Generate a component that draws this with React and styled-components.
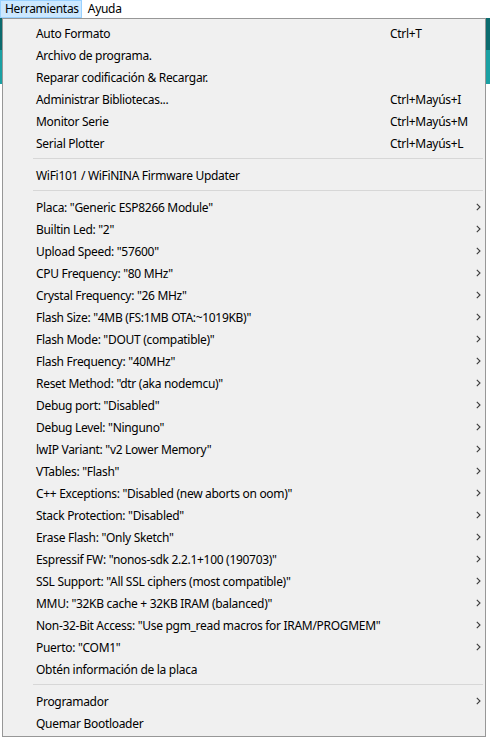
import React from 'react';
import styled, { createGlobalStyle } from 'styled-components';

const Global = createGlobalStyle`
    html, body {
        margin: 0;
        padding: 0;
        background: #ffffff;
    }
    body {
        font-family: "Segoe UI", "Noto Sans", "Open Sans", sans-serif;
        font-size: 12px;
        letter-spacing: -0.3px;
        color: #000;
    }
`;

const Page = styled.div`
    width: 490px;
    height: 740px;
    overflow: hidden;
    display: flex;
    flex-direction: column;
`;

const MenuBar = styled.div`
    display: flex;
    height: 18px;
    align-items: stretch;
    background: #ffffff;
`;

const BarItem = styled.div`
    display: flex;
    align-items: center;
    padding: 0 2px 0 4px;
    margin-right: ${p => p.active ? '1px' : '0'};
    background: ${p => p.active ? '#cce8ff' : 'transparent'};
    border: 1px solid ${p => p.active ? '#99d1ff' : 'transparent'};
    box-sizing: border-box;
    line-height: 16px;
`;

const Body = styled.div`
    display: grid;
    grid-template-columns: 2px 484px 4px;
    height: 718px;
`;

const Strip = styled.div`
    background: linear-gradient(
        to bottom,
        #0b6b6e 0px,
        #0b6b6e 32px,
        #1aa0a3 32px,
        #1aa0a3 66px,
        #ffffff 66px
    );
`;

const Menu = styled.div`
    background: #f0f0f0;
    border: 1px solid #979797;
    padding: 3px 2px 2px 2px;
    display: flex;
    flex-direction: column;
    min-width: 0;
`;

const Item = styled.div`
    display: grid;
    grid-template-columns: minmax(0, 1fr) 84px 9px;
    align-items: center;
    height: 22px;
    padding-left: 31px;
`;

const Label = styled.span`
    white-space: nowrap;
`;

const Shortcut = styled.span`
    white-space: nowrap;
`;

const Arrow = styled.svg`
    width: 5px;
    height: 8px;
    margin-left: 2px;
`;

const Separator = styled.div`
    height: 1px;
    background: #d7d7d7;
    margin: 4px 0 5px 28px;
`;

const Chevron = () => (
    <Arrow viewBox="0 0 5 8">
        <polyline points="0.8,0.8 4,4 0.8,7.2" fill="none" stroke="#3c3c3c" strokeWidth="1.1" />
    </Arrow>
);

const groups = [
    [
        { label: 'Auto Formato', key: 'Ctrl+T' },
        { label: 'Archivo de programa.' },
        { label: 'Reparar codificación & Recargar.' },
        { label: 'Administrar Bibliotecas...', key: 'Ctrl+Mayús+I' },
        { label: 'Monitor Serie', key: 'Ctrl+Mayús+M' },
        { label: 'Serial Plotter', key: 'Ctrl+Mayús+L' },
    ],
    [
        { label: 'WiFi101 / WiFiNINA Firmware Updater' },
    ],
    [
        { label: 'Placa: "Generic ESP8266 Module"', sub: true },
        { label: 'Builtin Led: "2"', sub: true },
        { label: 'Upload Speed: "57600"', sub: true },
        { label: 'CPU Frequency: "80 MHz"', sub: true },
        { label: 'Crystal Frequency: "26 MHz"', sub: true },
        { label: 'Flash Size: "4MB (FS:1MB OTA:~1019KB)"', sub: true },
        { label: 'Flash Mode: "DOUT (compatible)"', sub: true },
        { label: 'Flash Frequency: "40MHz"', sub: true },
        { label: 'Reset Method: "dtr (aka nodemcu)"', sub: true },
        { label: 'Debug port: "Disabled"', sub: true },
        { label: 'Debug Level: "Ninguno"', sub: true },
        { label: 'lwIP Variant: "v2 Lower Memory"', sub: true },
        { label: 'VTables: "Flash"', sub: true },
        { label: 'C++ Exceptions: "Disabled (new aborts on oom)"', sub: true },
        { label: 'Stack Protection: "Disabled"', sub: true },
        { label: 'Erase Flash: "Only Sketch"', sub: true },
        { label: 'Espressif FW: "nonos-sdk 2.2.1+100 (190703)"', sub: true },
        { label: 'SSL Support: "All SSL ciphers (most compatible)"', sub: true },
        { label: 'MMU: "32KB cache + 32KB IRAM (balanced)"', sub: true },
        { label: 'Non-32-Bit Access: "Use pgm_read macros for IRAM/PROGMEM"', sub: true },
        { label: 'Puerto: "COM1"', sub: true },
        { label: 'Obtén información de la placa' },
    ],
    [
        { label: 'Programador', sub: true },
        { label: 'Quemar Bootloader' },
    ],
];

const App = () => {
    return (
        <Page>
            <Global />
            <MenuBar>
                <BarItem active>Herramientas</BarItem>
                <BarItem>Ayuda</BarItem>
            </MenuBar>
            <Body>
                <Strip />
                <Menu>
                    {groups.map((group, gi) => (
                        <React.Fragment key={gi}>
                            {gi > 0 && <Separator />}
                            {group.map((item, i) => (
                                <Item key={i}>
                                    <Label>{item.label}</Label>
                                    <Shortcut>{item.key || ''}</Shortcut>
                                    {item.sub ? <Chevron /> : <span />}
                                </Item>
                            ))}
                        </React.Fragment>
                    ))}
                </Menu>
                <Strip />
            </Body>
        </Page>
    );
};

export default App;
